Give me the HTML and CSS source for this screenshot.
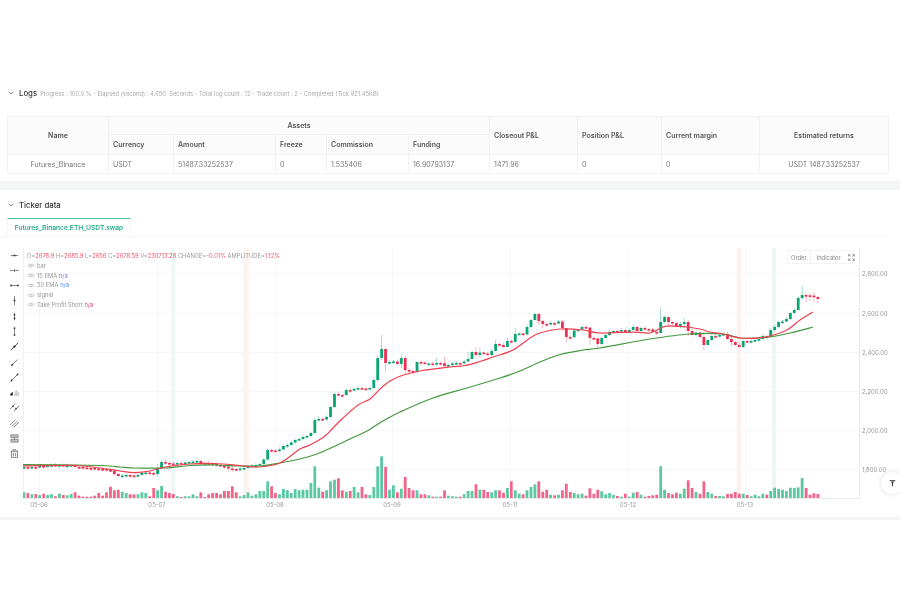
FILE: index.html
```html
<!DOCTYPE html>
<html lang="en">
<head>
<meta charset="utf-8">
<title>Backtest result</title>
<link rel="stylesheet" href="styles.css">
</head>
<body>
<svg class="defs" width="0" height="0" aria-hidden="true">
  <symbol id="eye" viewBox="0 0 16 10"><path d="M1 5C3.5 1.5 12.500 1.500 15 5 12.500 8.500 3.500 8.500 1 5Z" fill="none" stroke="currentColor"/><circle cx="8" cy="5" r="2" fill="none" stroke="currentColor"/></symbol>
  <symbol id="h1" viewBox="0 0 12 12"><path d="M1 6H11" stroke="#666" stroke-width="1"/><circle cx="6" cy="6" r="1.300" fill="#333"/></symbol>
  <symbol id="h2" viewBox="0 0 12 12"><path d="M0 6H4M8 6H12" stroke="#666" stroke-width="1"/><circle cx="6" cy="6" r="1.200" fill="#333"/></symbol>
  <symbol id="h3" viewBox="0 0 12 12"><path d="M1 6H11" stroke="#666" stroke-width="1"/><circle cx="1.500" cy="6" r="1.200" fill="#333"/><circle cx="10.500" cy="6" r="1.200" fill="#333"/></symbol>
  <symbol id="v1" viewBox="0 0 12 12"><path d="M6 0V12" stroke="#666" stroke-width="1"/><circle cx="6" cy="6" r="1.300" fill="#333"/></symbol>
  <symbol id="v2" viewBox="0 0 12 12"><path d="M6 1V11" stroke="#666" stroke-width="1"/><circle cx="6" cy="3.500" r="1.200" fill="#333"/><circle cx="6" cy="8.500" r="1.200" fill="#333"/></symbol>
  <symbol id="v3" viewBox="0 0 12 12"><path d="M6 1V11" stroke="#666" stroke-width="1"/><circle cx="6" cy="1.500" r="1.200" fill="#333"/><circle cx="6" cy="10.500" r="1.200" fill="#333"/></symbol>
  <symbol id="d1" viewBox="0 0 12 12"><path d="M1 11L11 1" stroke="#333" stroke-width="1.100"/><circle cx="6" cy="6" r="1.500" fill="#222"/></symbol>
  <symbol id="d2" viewBox="0 0 12 12"><path d="M2 10L10 2" stroke="#555" stroke-width="1"/><circle cx="3" cy="9" r="1.300" fill="#333"/></symbol>
  <symbol id="d3" viewBox="0 0 12 12"><path d="M2 10L10 2" stroke="#555" stroke-width="1"/><circle cx="2" cy="10" r="1.200" fill="#333"/><circle cx="10" cy="2" r="1.200" fill="#333"/></symbol>
  <symbol id="lbl" viewBox="0 0 12 12"><path d="M0 8L4 5V10H0Z" fill="#444"/><path d="M5 9.500H12M7 9.500V4M9 9.500V3M11 9.500V5" stroke="#999" stroke-width=".8"/></symbol>
  <symbol id="par" viewBox="0 0 12 12"><path d="M0 8L7 1M5 11L12 4" stroke="#666" stroke-width="1"/><circle cx="4" cy="4.500" r="1.100" fill="#333"/><circle cx="8" cy="7.500" r="1.100" fill="#333"/></symbol>
  <symbol id="fib" viewBox="0 0 12 12"><path d="M0 8L7 1M2.500 10L9.500 3M5 11L12 4" stroke="#666" stroke-width="1"/></symbol>
  <symbol id="rul" viewBox="0 0 12 12"><path d="M1 1H11V5H1ZM1 7H11V11H1ZM6 4V8" fill="#bbb" stroke="#666" stroke-width=".7"/></symbol>
  <symbol id="bin" viewBox="0 0 12 12"><path d="M1 3H11M4 3V1H8V3M2 3V11.500H10V3M4.500 5V10M7.500 5V10" fill="none" stroke="#555" stroke-width=".9"/></symbol>
</svg>

<main class="app">
  <section class="panel logs">
    <header class="panel-head">
      <svg class="chev" viewBox="0 0 8 5"><path d="M1 1L4 4 7 1" fill="none" stroke="#555"/></svg>
      <h2 class="panel-title">Logs</h2>
      <span class="progress">Progress : 100.0 % - Elapsed (second) : 4.650 &nbsp;Seconds - Total log count : 12 - Trade count : 2 - Completed (Tick 921.45KB)</span>
    </header>
    <table class="assets">
      <colgroup>
        <col class="c-name"><col class="c-cur"><col class="c-amt"><col class="c-frz"><col class="c-com"><col class="c-fun"><col class="c-close"><col class="c-pos"><col class="c-mar"><col class="c-est">
      </colgroup>
      <thead>
        <tr class="row-a">
          <th rowspan="2" class="mid">Name</th>
          <th colspan="5" class="mid">Assets</th>
          <th rowspan="2">Closeout P&amp;L</th>
          <th rowspan="2">Position P&amp;L</th>
          <th rowspan="2">Current margin</th>
          <th rowspan="2" class="mid">Estimated returns</th>
        </tr>
        <tr class="row-b">
          <th>Currency</th><th>Amount</th><th>Freeze</th><th>Commission</th><th>Funding</th>
        </tr>
      </thead>
      <tbody>
        <tr class="row-c">
          <td class="mid">Futures_Binance</td><td>USDT</td><td>51487.33252537</td><td>0</td><td>1.535406</td><td>16.90793137</td><td>1471.96</td><td>0</td><td>0</td><td class="mid">USDT 1487.33252537</td>
        </tr>
      </tbody>
    </table>
  </section>

  <section class="panel ticker">
    <header class="panel-head ticker-head">
      <svg class="chev" viewBox="0 0 8 5"><path d="M1 1L4 4 7 1" fill="none" stroke="#555"/></svg>
      <h2 class="panel-title">Ticker data</h2>
    </header>
    <div class="tabs"><span class="tab">Futures_Binance.ETH_USDT.swap</span></div>
    <div class="chart-wrap">
      <div class="tools">
        <svg class="tool"><use href="#h1"/></svg><svg class="tool"><use href="#h2"/></svg><svg class="tool"><use href="#h3"/></svg>
        <svg class="tool"><use href="#v1"/></svg><svg class="tool"><use href="#v2"/></svg><svg class="tool"><use href="#v3"/></svg>
        <svg class="tool"><use href="#d1"/></svg><svg class="tool"><use href="#d2"/></svg><svg class="tool"><use href="#d3"/></svg>
        <svg class="tool"><use href="#lbl"/></svg><svg class="tool"><use href="#par"/></svg><svg class="tool"><use href="#fib"/></svg>
        <svg class="tool"><use href="#rul"/></svg><svg class="tool"><use href="#bin"/></svg>
      </div>
      <div class="plot">
        <svg id="chart" class="chart" viewBox="23 237 877 280"></svg>
        <div class="legend">
          <div class="ohlc">O=<b>2678.9</b> H=<b>2685.9</b> L=<b>2656</b> C=<b>2678.59</b> V=<b>230713.28</b> CHANGE=<b>-0.01%</b> AMPLITUDE=<b>1.12%</b></div>
          <div class="lg"><svg class="eye"><use href="#eye"/></svg><span>bar</span></div>
          <div class="lg"><svg class="eye"><use href="#eye"/></svg><span>15 EMA <i class="purple">n/a</i></span></div>
          <div class="lg"><svg class="eye"><use href="#eye"/></svg><span>50 EMA <i class="blue">n/a</i></span></div>
          <div class="lg"><svg class="eye"><use href="#eye"/></svg><span>signal</span></div>
          <div class="lg"><svg class="eye"><use href="#eye"/></svg><span>Take Profit Short <i class="pink">n/a</i></span></div>
        </div>
        <div class="btns">
          <span class="btn">Order</span><span class="btn">Indicator</span>
          <svg class="full" viewBox="0 0 10 10"><path d="M1 3.500V1H3.500M6.500 1H9V3.500M9 6.500V9H6.500M3.500 9H1V6.500M1 1L3.500 3.500M9 1L6.500 3.500M9 9L6.500 6.500M1 9L3.500 6.500" fill="none" stroke="#666" stroke-width=".9"/></svg>
        </div>
        <div class="totop"><svg viewBox="0 0 10 10"><path d="M1 1H9M5 3V9M3 3H7" fill="none" stroke="#222" stroke-width="1.300"/></svg></div>
      </div>
    </div>
  </section>
  <div class="foot-strip"></div>
</main>
<script src="chart.js"></script>
</body>
</html>
```
FILE: styles.css
```css
* { box-sizing: border-box; }
html, body { margin: 0; padding: 0; background: #fff; }
body { font-family: Inter, "Liberation Sans", sans-serif; color: #444; width: 900px; height: 600px; overflow: hidden; }
.defs { position: absolute; }
.app { padding-top: 80px; filter: blur(.55px); }
.panel { background: #fff; }
.logs { height: 110px; border-bottom: 9px solid #f4f6f6; }
.panel-head { display: flex; align-items: center; height: 26px; padding-left: 8px; }
.chev { width: 6px; height: 4px; margin-right: 5px; }
.panel-title { margin: 0; font-size: 7.800px; font-weight: 500; color: #333; }
.progress { font-size: 5.800px; color: #aaa; margin-left: 3px; margin-top: 1px; white-space: nowrap; }
.assets { margin: 10px 0 0 7px; width: 881px; table-layout: fixed; border-collapse: collapse; font-size: 7px; }
.assets th, .assets td { border: 1px solid #f0f1f1; padding: 0 4px; text-align: left; white-space: nowrap; overflow: hidden; }
.assets th { background: #fbfbfb; font-weight: 600; color: #555; }
.assets td { color: #777; }
.assets .mid { text-align: center; }
.row-a { height: 18px; } .row-b { height: 20px; } .row-c { height: 19px; }
.c-name { width: 101px; } .c-cur { width: 65px; } .c-amt { width: 102px; } .c-frz { width: 51px; } .c-com { width: 82px; }
.c-fun { width: 81px; } .c-close { width: 88px; } .c-pos { width: 84px; } .c-mar { width: 98px; } .c-est { width: 129px; }
.ticker-head { height: 28px; padding-top: 1px; }
.tabs { height: 19px; padding-left: 7px; margin-right: 12px; border-bottom: 1px solid #f5f6f6; }
.tab { display: flex; align-items: center; justify-content: center; width: 124px; height: 19px; border-top: 1.500px solid #4cc3a0; border-left: 1px solid #f5f6f6; border-right: 1px solid #f5f6f6; font-size: 6.700px; font-weight: 500; color: #10a37f; white-space: nowrap; }
.chart-wrap { display: flex; height: 280px; }
.tools { width: 23px; flex: none; display: flex; flex-direction: column; align-items: center; gap: 6.300px; padding: 13.500px 0 0 5px; }
.tool { width: 9px; height: 9px; flex: none; }
.plot { position: relative; flex: 1; }
.chart { display: block; width: 877px; height: 280px; }
.chart text { font-family: Inter, "Liberation Sans", sans-serif; font-size: 6px; fill: #999; }
.legend { position: absolute; left: 4px; top: 14px; font-size: 5.800px; line-height: 9.800px; color: #999; }
.ohlc { white-space: nowrap; }
.ohlc b { font-weight: 400; color: #f0566a; }
.lg { display: flex; align-items: center; gap: 2px; height: 9.800px; white-space: nowrap; }
.lg i { font-style: normal; }
.eye { width: 8px; height: 5px; color: #aaa; }
.purple { color: #8a6ad8; } .blue { color: #4a86e8; } .pink { color: #e8407a; }
.btns { position: absolute; left: 764px; top: 13px; display: flex; align-items: center; height: 14px; width: 66px; background: #fff; border: 1px solid #f3f3f3; font-size: 5.800px; color: #888; }
.btn { padding: 0 3px; height: 100%; display: flex; align-items: center; white-space: nowrap; }
.btn:first-child { border-right: 1px solid #f0f0f0; }
.btn + .btn { padding-left: 6px; }
.full { width: 7px; height: 7px; margin-left: 4px; flex: none; }
.totop { position: absolute; left: 858px; top: 235px; width: 22px; height: 22px; border-radius: 50%; background: #fff; box-shadow: 0 0 5px rgba(0,0,0,.13); display: flex; align-items: center; justify-content: center; }
.totop svg { width: 7px; height: 7px; }
.foot-strip { height: 3px; background: #f4f6f6; }
```
FILE: chart.js
```js
// Draws the candlestick chart from a compact series (page-pixel coordinates).
(function () {
  var svg = document.getElementById('chart');
  var closes = [467,467.5,467,467.4,466,466.4,465.5,465,465.5,465,466,465.5,465,
    467,467,467.5,468,468,468.5,469,469,470,471,474,476,
    475.5,475,475.5,476,475,473,472.5,473,474,468,462,463,463.5,463.8,463,463,462.5,462,461.5,461,463,463,463.5,464,465,466,466.5,468.5,469,469.5,468.5,468,466,465.5,465,464,459.5,450,450.5,451,449.5,446,445,442.5,440,439,
    437,436,433,420,419,419.5,417,407,394,395,395,390,390.5,389,388,388.5,389,388,380,358,349,363,362,361.500,364,358,370,371,372,362,362.5,364,363.5,363.8,363,363.2,366,365,363.5,363,363.3,361.5,359,352,355,352.5,353.5,355,351,344,345,347,341,342,334,333.5,334.5,327,320,314,321,324,324.3,323,323.5,321.5,328,337,337.3,330.5,329.5,327,327.5,338,338.3,344,
    338,335,332,331,331.3,330,332,330,327,331,328,329,329.3,332,333,322,317,322,323,327,324,322,331,335,332.500,337,345,340,336,336.3,335,334,339,342,345,347,341,342,341,340,339,336,336.500,330,327,322,321.500,319,313,310,298,295,295.300,295.600,297,299];
  var wick = {34:[464,476],36:[459,465],52:[466,471],62:[449,461],75:[416,421],90:[356,382],91:[335,360],92:[348,372],93:[360,364],96:[354,368],97:[356,375],98:[369,375],99:[370,375],100:[361,373],105:[358,366],107:[357,368],113:[352,361],115:[347,357],116:[347,358],120:[340,346],123:[338,345],125:[328,336],131:[313,325],132:[320,328],137:[320,331],138:[330,342],144:[331,345],146:[338,349],162:[308,326],164:[318,327],168:[318,328],169:[320,336],173:[332,350],180:[336,346],198:[286,300],199:[293,302],200:[293,301],201:[292,302],202:[296,303]};
  var vols = [
    [0,400,295,[[70,278],[82,280],[94,284],[106,283],[118,286],[130,282],[142,286],[154,284],[166,290],[178,282],[190,286],[200,287],[212,283],[224,278],[236,288],[248,291],[260,291],[272,291],[284,288],[296,280],[308,288],[320,278],[332,261],[344,272],[356,270],[368,276],[380,280],[392,284],[404,284],[416,284],[428,278],[440,280],[452,290],[460,265],[472,272],[484,259],[496,276],[508,280],[520,283],[532,290],[544,292],[556,290],[568,290],[580,284],[592,290],[604,278],[616,292],[628,284],[640,280],[652,280],[664,284],[676,274],[688,274],[696,260],[708,278],[720,290],[732,286],[744,278],[756,288],[768,284],[780,274],[790,274],[802,245],[814,260],[826,280],[838,284],[850,268],[862,272],[874,280],[886,268],[898,272]]],
    [300,320,533,[[8,508],[20,508],[30,488],[42,438],[55,502],[68,514],[80,510],[90,483],[102,478],[113,474],[125,510],[137,514],[150,512],[162,500],[172,516],[184,500],[196,522],[208,524],[220,500],[232,438],[243,408],[255,440],[268,508],[280,495],[292,516],[302,505],[314,470],[325,503],[337,510],[349,510],[360,522],[372,522],[384,525],[396,529],[408,529],[420,529],[432,510],[444,526],[456,528],[468,529],[480,529],[490,522],[502,512],[513,512],[525,492],[537,508],[549,508],[561,515],[573,516],[585,510],[597,510],[608,517],[620,503],[632,483],[644,510],[656,520],[668,522],[680,510],[692,500],[702,492],[714,483],[725,514],[737,508],[749,523],[761,525],[773,523],[785,510],[797,490],[808,515],[820,518],[832,522],[844,520],[856,526],[868,504],[880,520],[892,508]]],
    [600,380,353,[[3,333],[15,342],[27,338],[39,344],[51,347],[63,349],[75,340],[87,349],[97,337],[109,335],[121,343],[133,349],[145,347],[157,345],[168,343],[180,258],[192,328],[204,338],[216,342],[228,337],[240,340],[251,325],[263,300],[275,323],[287,335],[298,340],[310,303],[322,335],[334,340],[346,347],[358,347],[370,348],[380,341],[392,340],[404,335],[416,340],[428,340],[440,344],[451,348],[463,343],[475,348],[487,340],[498,343],[510,332],[522,322],[534,326],[545,328],[557,332],[569,322],[581,323],[591,321],[603,293],[615,323],[627,343],[639,339],[651,341]]]
  ];
  var red15 = [[23,466],[60,465.5],[75,465.5],[100,468],[120,471],[135,472.5],[150,471],[165,467],[190,464],[215,463.5],[240,465.5],[258,467],[280,463],[300,449],[310,445],[325,436],[333,428],[343,418],[358,405],[370,399],[380,389],[390,381],[402,375.5],[420,371],[450,367],[465,365.5],[480,361.5],[493,357],[513,350],[530,338],[540,333],[560,329],[583,330],[600,333],[633,332],[650,333],[663,327],[673,326],[687,327],[700,329],[710,332],[723,334],[740,338],[757,338],[770,336],[787,330],[800,320],[813,312]];
  var green50 = [[23,464.5],[100,465.5],[120,467],[135,468],[165,468],[190,465.5],[215,465],[240,466],[260,466],[280,463],[300,459],[317,454],[333,447],[350,439],[367,431],[383,421],[400,412],[433,398],[467,388],[500,378],[520,371],[540,362],[560,354.5],[583,350],[600,348],[650,339],[690,334],[723,334],[740,338],[757,338],[770,337],[790,333],[813,327]];
  var TOP = 248, BOT = 498, RIGHT = 859, GREEN = '#0ba574', RED = '#ee2f52';
  var html = [];
  function rect(x, y, w, h, f) { html.push('<rect x="' + x + '" y="' + y + '" width="' + w + '" height="' + h + '" fill="' + f + '"/>'); }
  function path(pts, c) {
    var d = 'M' + pts[0][0] + ' ' + pts[0][1];
    for (var i = 0; i < pts.length - 1; i++) {
      var p0 = pts[i - 1] || pts[i], p1 = pts[i], p2 = pts[i + 1], p3 = pts[i + 2] || p2;
      d += 'C' + (p1[0] + (p2[0] - p0[0]) / 6).toFixed(1) + ' ' + (p1[1] + (p2[1] - p0[1]) / 6).toFixed(1) + ' ' +
        (p2[0] - (p3[0] - p1[0]) / 6).toFixed(1) + ' ' + (p2[1] - (p3[1] - p1[1]) / 6).toFixed(1) + ' ' + p2[0] + ' ' + p2[1];
    }
    html.push('<path d="' + d + '" fill="none" stroke="' + c + '" stroke-width="1.250" stroke-linejoin="round"/>');
  }
  var ys = [[273, '2,800.00'], [313, '2,600.00'], [352, '2,400.00'], [391, '2,200.00'], [430, '2,000.00'], [469, '1,800.00']];
  var xs = [[39, '05-06'], [157, '05-07'], [275, '05-08'], [392, '05-09'], [510, '05-11'], [628, '05-12'], [745, '05-13']];
  ys.forEach(function (t) { rect(23, t[0], RIGHT - 23, 1, '#f6f7f7'); });
  xs.forEach(function (t) { rect(t[0], TOP, 1, BOT - TOP, '#f6f7f7'); });
  rect(23, TOP, 1, BOT - TOP, '#f0f1f1');
  rect(171, TOP, 4, BOT - TOP, '#f0f8f5');
  rect(243, TOP, 6, BOT - TOP, '#fdf4f2');
  rect(737, TOP, 4, BOT - TOP, '#fdf0ee');
  rect(772, TOP, 4, BOT - TOP, '#eff7f4');
  function cx(i) { return 24 + 3.93 * i; }
  function up(i) { var o = i ? closes[i - 1] : closes[0] + .5; return closes[i] < o; }
  vols.forEach(function (seg) {
    seg[3].forEach(function (v) {
      var x = seg[0] + v[0] / 3, i = Math.max(0, Math.min(closes.length - 1, Math.round((x - 24) / 3.93)));
      var h = (seg[2] - v[1]) / 3;
      rect((cx(i) - 1.4).toFixed(1), (BOT - h).toFixed(1), 2.8, h.toFixed(1), up(i) ? '#5cc8a2' : '#f2658a');
    });
  });
  closes.forEach(function (c, i) {
    var o = i ? closes[i - 1] : c + .5, g = c < o, t = Math.min(o, c), b = Math.max(o, c);
    if (b - t < 1.6) { b = t + 1.6; }
    var w = wick[i] || [t - 1 - (i % 3) * .5, b + .5 + (i % 2) * .7], x = cx(i);
    rect((x - .35).toFixed(2), w[0], .7, (w[1] - w[0]).toFixed(1), g ? '#7fcfb5' : '#f59aaa');
    rect((x - 1.4).toFixed(2), t, 2.8, (b - t).toFixed(1), g ? GREEN : RED);
  });
  path(green50, '#43993f');
  path(red15, '#ee4150');
  rect(RIGHT, TOP, 1, BOT - TOP + 1, '#e9ebeb');
  rect(23, BOT, RIGHT - 22, 1, '#e9ebeb');
  ys.forEach(function (t) { html.push('<text x="862" y="' + (t[0] + 2.5) + '">' + t[1] + '</text>'); });
  xs.forEach(function (t) { html.push('<text x="' + t[0] + '" y="507" text-anchor="middle">' + t[1] + '</text>'); });
  svg.innerHTML = html.join('');
})();
```
